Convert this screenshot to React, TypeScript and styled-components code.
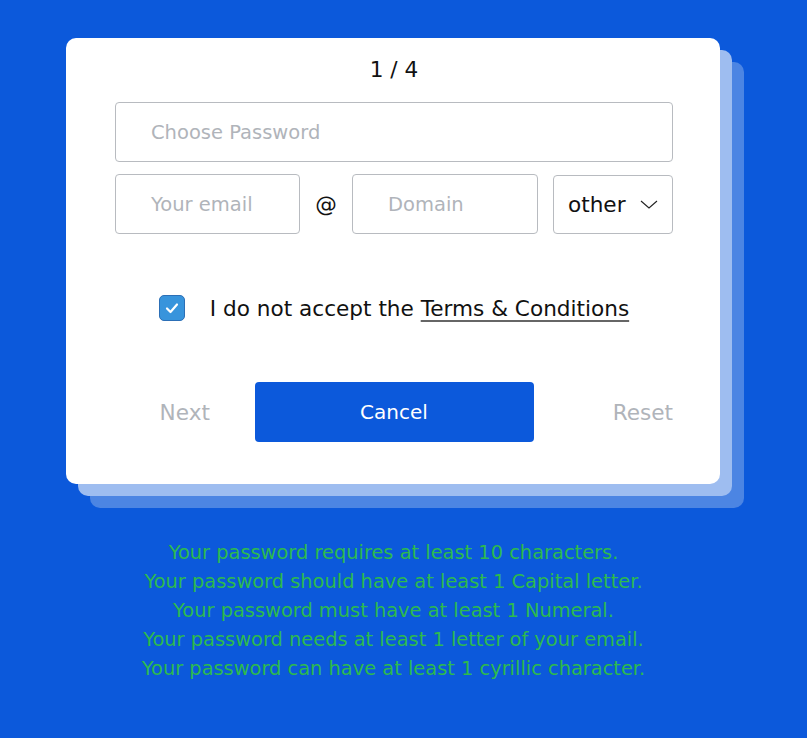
import styled, { createGlobalStyle } from 'styled-components';

const GlobalStyle = createGlobalStyle`
  html, body {
    margin: 0;
    padding: 0;
    background: #0c59db;
  }
  body {
    font-family: 'DejaVu Sans', 'Liberation Sans', sans-serif;
  }
`;

const Page = styled.div`
  width: 807px;
  min-height: 738px;
  padding-top: 38px;
  box-sizing: border-box;
  display: flex;
  flex-direction: column;
  align-items: flex-start;
`;

const Card = styled.div`
  margin-left: 66px;
  width: 654px;
  height: 446px;
  box-sizing: border-box;
  padding: 20px 47px 0 49px;
  background: #fff;
  border-radius: 10px;
  box-shadow: 12px 12px 0 #9ebdf0, 24px 24px 0 #4c85e3;
  display: flex;
  flex-direction: column;
`;

const Step = styled.div`
  text-align: center;
  font-size: 21.6px;
  line-height: 23px;
  color: #111;
  margin-bottom: 21px;
`;

const Field = styled.div<{ $width?: number }>`
  height: 60px;
  box-sizing: border-box;
  width: ${p => (p.$width ? `${p.$width}px` : '100%')};
  border: 1px solid #b8bbc0;
  border-radius: 4px;
  display: flex;
  align-items: center;
  padding-left: 35px;
  font-size: 19.5px;
  color: #b0b4ba;
`;

const Row = styled.div`
  display: flex;
  align-items: center;
  margin-top: 12px;
`;

const At = styled.span`
  width: 52px;
  text-align: center;
  font-size: 21.6px;
  color: #111;
`;

const Select = styled.div`
  margin-left: 15px;
  width: 120px;
  height: 59px;
  box-sizing: border-box;
  border: 1px solid #b8bbc0;
  border-radius: 4px;
  display: flex;
  align-items: center;
  justify-content: space-between;
  padding: 0 14px 0 14px;
  font-size: 21.6px;
  color: #111;
`;

const CheckRow = styled.label`
  display: flex;
  align-items: center;
  justify-content: center;
  gap: 25px;
  margin-top: 61px;
  font-size: 21.6px;
  color: #111;
`;

const Box = styled.span`
  width: 26px;
  height: 26px;
  box-sizing: border-box;
  border-radius: 5px;
  background: #3894dc;
  border: 1px solid #2c6fb6;
  display: flex;
  align-items: center;
  justify-content: center;
`;

const Terms = styled.span`
  text-decoration: underline;
  text-decoration-color: #666;
  text-underline-offset: 4px;
`;

const Actions = styled.div`
  display: grid;
  grid-template-columns: 1fr 279px 1fr;
  align-items: center;
  margin-top: 61px;
`;

const TextButton = styled.button<{ $end?: boolean }>`
  justify-self: ${p => (p.$end ? 'end' : 'center')};
  border: none;
  background: none;
  padding: 0;
  font-family: inherit;
  font-size: 21.6px;
  color: #b0b4ba;
`;

const Primary = styled.button`
  height: 60px;
  border: none;
  border-radius: 4px;
  background: #0c59db;
  color: #fff;
  font-family: inherit;
  font-size: 20px;
`;

const Rules = styled.ul`
  list-style: none;
  margin: 54px 0 0;
  padding: 0;
  width: 787px;
  text-align: center;
  font-size: 19.4px;
  line-height: 29px;
  color: #2dba4e;
`;

const rules = [
  'Your password requires at least 10 characters.',
  'Your password should have at least 1 Capital letter.',
  'Your password must have at least 1 Numeral.',
  'Your password needs at least 1 letter of your email.',
  'Your password can have at least 1 cyrillic character.',
];

export default function App() {
  return (
    <Page>
      <GlobalStyle />
      <Card>
        <Step>1 / 4</Step>
        <Field>Choose Password</Field>
        <Row>
          <Field $width={185}>Your email</Field>
          <At>@</At>
          <Field $width={186}>Domain</Field>
          <Select>
            other
            <svg width="18" height="9" viewBox="0 0 18 9" fill="none">
              <polyline points="1,1 9,8 17,1" stroke="#222" strokeWidth="1.1" />
            </svg>
          </Select>
        </Row>
        <CheckRow>
          <Box>
            <svg width="14" height="12" viewBox="0 0 14 12" fill="none">
              <polyline points="2,6.5 5.5,10 12,2.5" stroke="#fff" strokeWidth="2.2" strokeLinecap="round" strokeLinejoin="round" />
            </svg>
          </Box>
          <span>
            I do not accept the <Terms>Terms &amp; Conditions</Terms>
          </span>
        </CheckRow>
        <Actions>
          <TextButton>Next</TextButton>
          <Primary>Cancel</Primary>
          <TextButton $end>Reset</TextButton>
        </Actions>
      </Card>
      <Rules>
        {rules.map(r => (
          <li key={r}>{r}</li>
        ))}
      </Rules>
    </Page>
  );
}
